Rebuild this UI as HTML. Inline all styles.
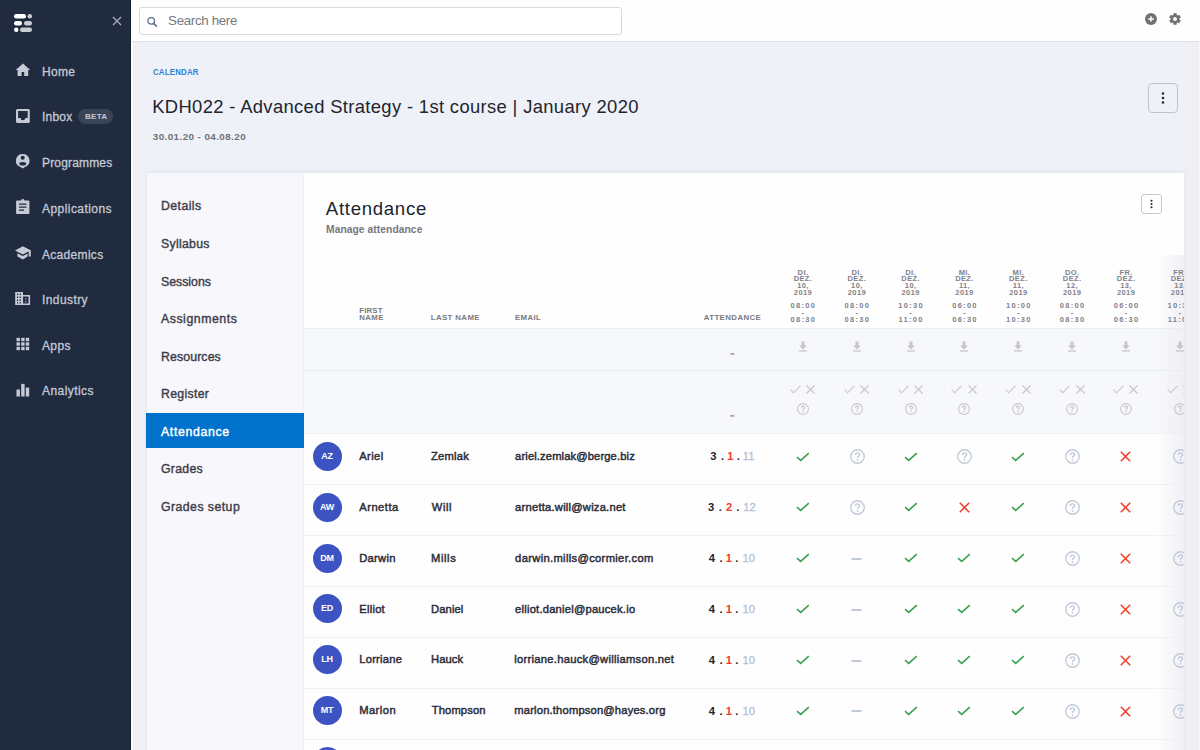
<!DOCTYPE html>
<html><head><meta charset="utf-8">
<style>
*{margin:0;padding:0;box-sizing:border-box}
html,body{width:1200px;height:750px;overflow:hidden}
body{position:relative;background:#eff1f8;font-family:"Liberation Sans",sans-serif;}
.a{position:absolute;white-space:nowrap;line-height:1}
.ic{position:absolute}
</style></head>
<body>

<div class="a" style="left:0;top:0;width:131px;height:750px;background:#202b3f"></div>
<svg class="a" style="left:13px;top:13px" width="21" height="21" viewBox="0 0 21 21">
    <rect x="1" y="1" width="12" height="4.5" rx="2.25" fill="#fff"/>
    <circle cx="16.8" cy="3.25" r="2.25" fill="#c9ccd3"/>
    <rect x="1" y="8" width="8" height="4.5" rx="2.25" fill="#fff"/>
    <rect x="11" y="8" width="8" height="4.5" rx="2.25" fill="#c9ccd3"/>
    <circle cx="3.25" cy="16.8" r="2.25" fill="#fff"/>
    <rect x="7" y="14.5" width="12" height="4.5" rx="2.25" fill="#c9ccd3"/>
  </svg>
  <svg class="a" style="left:112px;top:16px" width="10" height="10" viewBox="0 0 10 10"><path d="M1 1L9 9M9 1L1 9" stroke="#aab0bc" stroke-width="1.2"/></svg>
  <svg class="a" style="left:0;top:0" width="131" height="420" viewBox="0 0 131 420">
  <g fill="#c5cad6">
    <path d="M23 63.6L15.6 69.9H17.6V76H21.6V72.1H24.2V76H28.2V69.9H30.2Z"/>
    <path fill-rule="evenodd" d="M17.5 109H28.3Q29.8 109 29.8 110.5V121.5Q29.8 123 28.3 123H17.5Q16 123 16 121.5V110.5Q16 109 17.5 109ZM18.1 111.1V117.9H20.6A2.3 2.3 0 0 0 25.2 117.9H27.7V111.1Z"/>
    <path fill-rule="evenodd" d="M22.7 153.9A6.8 6.8 0 0 1 25 167.1L22.7 168.6L20.4 167.1A6.8 6.8 0 0 1 22.7 153.9ZM22.7 155.8A2 2 0 1 0 22.7 159.8A2 2 0 1 0 22.7 155.8ZM19.2 163.7A3.5 1.8 0 1 0 26.2 163.7A3.5 1.8 0 1 0 19.2 163.7Z"/>
    <path fill-rule="evenodd" d="M17 200.4H21.1Q21.6 199 22.9 199Q24.2 199 24.6 200.4H28.5Q29.4 200.4 29.4 201.3V213Q29.4 213.9 28.5 213.9H17Q16.1 213.9 16.1 213V201.3Q16.1 200.4 17 200.4ZM19 203.6V204.8H26.5V203.6ZM19 206.6V207.8H26.5V206.6ZM19 209.5V210.7H24V209.5Z"/>
    <path d="M22.8 246.2L30.8 250.3V256.6H28.7V251.5L22.8 254.5L15 250.4Z"/>
    <path d="M17.4 253.3L22.8 256.1L27.6 253.6V256.4L22.8 259.4L17.4 256.4Z"/>
    <path fill-rule="evenodd" d="M15.2 291.9H23V295H30.1V304.9H15.2ZM17 293.5V295H18.2V293.5ZM19.6 293.5V295H20.8V293.5ZM17 296.6V298.1H18.2V296.6ZM19.6 296.6V298.1H20.8V296.6ZM17 299.4V300.9H18.2V299.4ZM19.6 299.4V300.9H20.8V299.4ZM17 302.2V303.6H18.2V302.2ZM19.6 302.2V303.6H20.8V302.2ZM23.1 296.6V303.6H28.5V296.6Z"/>
    <rect x="25.2" y="298.4" width="1.2" height="1.2"/><rect x="25.2" y="301.2" width="1.2" height="1.2"/>
    <rect x="16.5" y="337.8" width="3.4" height="3.4"/><rect x="21.2" y="337.8" width="3.4" height="3.4"/><rect x="25.8" y="337.8" width="3.4" height="3.4"/>
    <rect x="16.5" y="342.3" width="3.4" height="3.4"/><rect x="21.2" y="342.3" width="3.4" height="3.4"/><rect x="25.8" y="342.3" width="3.4" height="3.4"/>
    <rect x="16.5" y="346.8" width="3.4" height="3.4"/><rect x="21.2" y="346.8" width="3.4" height="3.4"/><rect x="25.8" y="346.8" width="3.4" height="3.4"/>
    <rect x="16.5" y="389.5" width="3.4" height="7"/><rect x="21.2" y="383.9" width="3.4" height="12.6"/><rect x="25.8" y="387.6" width="3.4" height="8.9"/>
  </g>
  </svg>

<div class="a" style="left:42.00px;top:66.20px;font-size:12px;font-weight:normal;color:#c3c9d5;letter-spacing:0.300px;-webkit-text-stroke:0.3px #c3c9d5">Home</div>
<div class="a" style="left:42.00px;top:111.48px;font-size:12px;font-weight:normal;color:#c3c9d5;letter-spacing:0.200px;-webkit-text-stroke:0.3px #c3c9d5">Inbox</div>
<div class="a" style="left:42.00px;top:157.40px;font-size:12px;font-weight:normal;color:#c3c9d5;letter-spacing:0.167px;-webkit-text-stroke:0.3px #c3c9d5">Programmes</div>
<div class="a" style="left:42.00px;top:203.00px;font-size:12px;font-weight:normal;color:#c3c9d5;letter-spacing:0.445px;-webkit-text-stroke:0.3px #c3c9d5">Applications</div>
<div class="a" style="left:42.00px;top:248.60px;font-size:12px;font-weight:normal;color:#c3c9d5;letter-spacing:0.310px;-webkit-text-stroke:0.3px #c3c9d5">Academics</div>
<div class="a" style="left:42.00px;top:294.20px;font-size:12px;font-weight:normal;color:#c3c9d5;letter-spacing:0.414px;-webkit-text-stroke:0.3px #c3c9d5">Industry</div>
<div class="a" style="left:42.00px;top:339.80px;font-size:12px;font-weight:normal;color:#c3c9d5;letter-spacing:0.353px;-webkit-text-stroke:0.3px #c3c9d5">Apps</div>
<div class="a" style="left:42.00px;top:385.40px;font-size:12px;font-weight:normal;color:#c3c9d5;letter-spacing:0.440px;-webkit-text-stroke:0.3px #c3c9d5">Analytics</div>
<div class="a" style="left:78.3px;top:109px;width:35.2px;height:14.8px;border-radius:7.4px;background:#3a4457"></div>
<div class="a" style="left:85.00px;top:112.50px;font-size:8px;font-weight:bold;color:#c5cad6;letter-spacing:0.300px;">BETA</div>
<div class="a" style="left:131px;top:0;width:1.5px;height:750px;background:#fafbfd"></div>
<div class="a" style="left:132.5px;top:0;width:15px;height:750px;background:linear-gradient(to right,#f0f0f4,rgba(239,241,248,0))"></div>
<div class="a" style="left:1183px;top:0;width:15.6px;height:750px;background:#efeff4"></div>
<div class="a" style="left:1198.6px;top:0;width:1.4px;height:750px;background:#f9f9fb"></div>
<div class="a" style="left:130px;top:0;width:1px;height:750px;background:#1b2332"></div>
<div class="a" style="left:131px;top:0;width:1069px;height:42px;background:#fefeff;border-bottom:1px solid #e2e3ea"></div>
<div class="a" style="left:139px;top:7px;width:483px;height:28px;border:1.3px solid #d3d8e2;border-radius:3px;background:#fff"></div>
<svg class="a" style="left:146px;top:16px" width="12" height="12" viewBox="0 0 12 12"><circle cx="5.2" cy="4.9" r="3.3" fill="none" stroke="#5d7190" stroke-width="1.3"/><path d="M7.6 7.4L10.9 10.6" stroke="#5d7190" stroke-width="1.5"/></svg>
<div class="a" style="left:168.10px;top:14.04px;font-size:13.3px;font-weight:normal;color:#77777c;letter-spacing:-0.320px;">Search here</div>
<svg class="a" style="left:1145px;top:13px" width="12" height="12" viewBox="0 0 12 12"><circle cx="6" cy="6" r="6" fill="#707075"/><path d="M6 3.2V8.8M3.2 6H8.8" stroke="#fff" stroke-width="1.4"/></svg>
<svg class="a" style="left:1169px;top:13px" width="12" height="12" viewBox="0 0 12 12"><path fill="#707075" fill-rule="evenodd" d="M10.37 6.54 L11.82 7.45 L10.16 10.32 L8.65 9.51 L7.71 10.05 L7.66 11.77 L4.34 11.77 L4.29 10.05 L3.35 9.51 L1.84 10.32 L0.18 7.45 L1.63 6.54 L1.63 5.46 L0.18 4.55 L1.84 1.68 L3.35 2.49 L4.29 1.95 L4.34 0.23 L7.66 0.23 L7.71 1.95 L8.65 2.49 L10.16 1.68 L11.82 4.55 L10.37 5.46Z M8 6A2 2 0 1 0 4 6A2 2 0 1 0 8 6Z"/></svg>
<div class="a" style="left:152.80px;top:68.30px;font-size:9px;font-weight:bold;color:#2f7fd3;letter-spacing:0.250px;transform:scaleX(0.87);transform-origin:0 0">CALENDAR</div>
<div class="a" style="left:152.20px;top:98.12px;font-size:18.4px;font-weight:normal;color:#22242e;letter-spacing:0.347px;">KDH022 - Advanced Strategy - 1st course | January 2020</div>
<div class="a" style="left:152.80px;top:131.50px;font-size:9.9px;font-weight:bold;color:#707078;letter-spacing:0.400px;">30.01.20 - 04.08.20</div>
<div class="a" style="left:1148px;top:83px;width:30px;height:30px;border:1.2px solid #c2c3c9;border-radius:4px"></div>
<svg class="a" style="left:1148px;top:83px" width="30" height="30"><g fill="#2a2b33"><circle cx="15" cy="10.5" r="1.3"/><circle cx="15" cy="15" r="1.3"/><circle cx="15" cy="19.5" r="1.3"/></g></svg>
<div class="a" style="left:146.5px;top:172.7px;width:1037px;height:600px;background:#f8f8fc;box-shadow:0 -1px 4px rgba(40,40,70,0.07)"></div>
<div class="a" style="left:304px;top:172.7px;width:880px;height:578px;background:#fefeff"></div>
<div class="a" style="left:303.3px;top:176px;width:1px;height:578px;background:#eeeef3"></div>
<div class="a" style="left:146px;top:413px;width:158px;height:35px;background:#0072cc"></div>
<div class="a" style="left:161.00px;top:199.90px;font-size:12.3px;font-weight:normal;color:#3d3e49;letter-spacing:0.433px;-webkit-text-stroke:0.4px #3d3e49">Details</div>
<div class="a" style="left:161.00px;top:237.77px;font-size:12.3px;font-weight:normal;color:#3d3e49;letter-spacing:0.289px;-webkit-text-stroke:0.4px #3d3e49">Syllabus</div>
<div class="a" style="left:161.00px;top:275.64px;font-size:12.3px;font-weight:normal;color:#3d3e49;letter-spacing:0.003px;-webkit-text-stroke:0.4px #3d3e49">Sessions</div>
<div class="a" style="left:161.00px;top:312.71px;font-size:12.3px;font-weight:normal;color:#3d3e49;letter-spacing:0.540px;-webkit-text-stroke:0.4px #3d3e49">Assignments</div>
<div class="a" style="left:161.00px;top:350.58px;font-size:12.3px;font-weight:normal;color:#3d3e49;letter-spacing:0.120px;-webkit-text-stroke:0.4px #3d3e49">Resources</div>
<div class="a" style="left:161.00px;top:388.45px;font-size:12.3px;font-weight:normal;color:#3d3e49;letter-spacing:0.300px;-webkit-text-stroke:0.4px #3d3e49">Register</div>
<div class="a" style="left:161.00px;top:425.52px;font-size:12.3px;font-weight:normal;color:#fff;letter-spacing:0.656px;-webkit-text-stroke:0.4px #fff">Attendance</div>
<div class="a" style="left:161.00px;top:463.39px;font-size:12.3px;font-weight:normal;color:#3d3e49;letter-spacing:0.284px;-webkit-text-stroke:0.4px #3d3e49">Grades</div>
<div class="a" style="left:161.00px;top:501.26px;font-size:12.3px;font-weight:normal;color:#3d3e49;letter-spacing:0.445px;-webkit-text-stroke:0.4px #3d3e49">Grades setup</div>
<div class="a" style="left:325.80px;top:199.58px;font-size:18.6px;font-weight:normal;color:#202330;letter-spacing:0.711px;">Attendance</div>
<div class="a" style="left:326.00px;top:225.04px;font-size:10.3px;font-weight:bold;color:#76767e;letter-spacing:0.050px;">Manage attendance</div>
<div class="a" style="left:1141px;top:194px;width:21px;height:20px;border:1.1px solid #c9cacf;border-radius:3px"></div>
<svg class="a" style="left:1141px;top:194px" width="21" height="20"><g fill="#2a2b33"><circle cx="10.5" cy="6.8" r="1.05"/><circle cx="10.5" cy="10" r="1.05"/><circle cx="10.5" cy="13.2" r="1.05"/></g></svg>
<div class="a" style="left:359.20px;top:307.24px;font-size:7.8px;font-weight:bold;color:#7a7a80;letter-spacing:0.200px;">FIRST</div>
<div class="a" style="left:359.20px;top:314.24px;font-size:7.8px;font-weight:bold;color:#7a7a80;letter-spacing:0.453px;">NAME</div>
<div class="a" style="left:430.80px;top:313.94px;font-size:7.8px;font-weight:bold;color:#7a7a80;letter-spacing:0.400px;">LAST NAME</div>
<div class="a" style="left:514.90px;top:313.59px;font-size:7.8px;font-weight:bold;color:#7a7a80;letter-spacing:0.400px;">EMAIL</div>
<div class="a" style="left:703.70px;top:314.24px;font-size:7.8px;font-weight:bold;color:#7a7a80;letter-spacing:0.444px;">ATTENDANCE</div>
<div class="a" style="left:304px;top:172px;width:880px;height:578px;overflow:hidden">
<div class="a" style="left:0;top:156px;width:880px;height:43px;background:#f7f8fc;border-top:1px solid #e9edf4"></div>
<div class="a" style="left:0;top:198px;width:880px;height:63px;background:#f7f8fc;border-top:1px solid #e8ecf3"></div>
<div class="a" style="left:0;top:261.0px;width:880px;height:51px;border-top:1px solid #f0f1f6;background:#fefeff"></div>
<div class="a" style="left:0;top:312.0px;width:880px;height:51px;border-top:1px solid #f0f1f6;background:#fefeff"></div>
<div class="a" style="left:0;top:363.0px;width:880px;height:51px;border-top:1px solid #f0f1f6;background:#fefeff"></div>
<div class="a" style="left:0;top:414.0px;width:880px;height:51px;border-top:1px solid #f0f1f6;background:#fefeff"></div>
<div class="a" style="left:0;top:465.0px;width:880px;height:51px;border-top:1px solid #f0f1f6;background:#fefeff"></div>
<div class="a" style="left:0;top:516.0px;width:880px;height:51px;border-top:1px solid #f0f1f6;background:#fefeff"></div>
<div class="a" style="left:0;top:567.0px;width:880px;height:51px;border-top:1px solid #f0f1f6;background:#fefeff"></div>
<div class="a" style="left:852px;top:83px;width:28px;height:600px;background:linear-gradient(to right,rgba(238,238,244,0),rgba(236,236,242,0.75))"></div>
<div style="position:absolute;width:60px;text-align:center;font-size:7.5px;font-weight:bold;color:#818189;letter-spacing:0.4px;line-height:6.85px;left:469.0px;top:97.6px">DI.<br>DEZ.<br>10,<br>2019</div>
<div style="position:absolute;width:60px;text-align:center;font-size:7.5px;font-weight:bold;color:#818189;letter-spacing:1.3px;line-height:7.05px;left:469.4px;top:129.6px">08:00<br>-<br>08:30</div>
<div style="position:absolute;width:60px;text-align:center;font-size:7.5px;font-weight:bold;color:#818189;letter-spacing:0.4px;line-height:6.85px;left:522.9px;top:97.6px">DI.<br>DEZ.<br>10,<br>2019</div>
<div style="position:absolute;width:60px;text-align:center;font-size:7.5px;font-weight:bold;color:#818189;letter-spacing:1.3px;line-height:7.05px;left:523.3px;top:129.6px">08:00<br>-<br>08:30</div>
<div style="position:absolute;width:60px;text-align:center;font-size:7.5px;font-weight:bold;color:#818189;letter-spacing:0.4px;line-height:6.85px;left:576.7px;top:97.6px">DI.<br>DEZ.<br>10,<br>2019</div>
<div style="position:absolute;width:60px;text-align:center;font-size:7.5px;font-weight:bold;color:#818189;letter-spacing:1.3px;line-height:7.05px;left:577.1px;top:129.6px">10:30<br>-<br>11:00</div>
<div style="position:absolute;width:60px;text-align:center;font-size:7.5px;font-weight:bold;color:#818189;letter-spacing:0.4px;line-height:6.85px;left:630.5px;top:97.6px">MI.<br>DEZ.<br>11,<br>2019</div>
<div style="position:absolute;width:60px;text-align:center;font-size:7.5px;font-weight:bold;color:#818189;letter-spacing:1.3px;line-height:7.05px;left:631.0px;top:129.6px">06:00<br>-<br>06:30</div>
<div style="position:absolute;width:60px;text-align:center;font-size:7.5px;font-weight:bold;color:#818189;letter-spacing:0.4px;line-height:6.85px;left:684.4px;top:97.6px">MI.<br>DEZ.<br>11,<br>2019</div>
<div style="position:absolute;width:60px;text-align:center;font-size:7.5px;font-weight:bold;color:#818189;letter-spacing:1.3px;line-height:7.05px;left:684.8px;top:129.6px">10:00<br>-<br>10:30</div>
<div style="position:absolute;width:60px;text-align:center;font-size:7.5px;font-weight:bold;color:#818189;letter-spacing:0.4px;line-height:6.85px;left:738.2px;top:97.6px">DO.<br>DEZ.<br>12,<br>2019</div>
<div style="position:absolute;width:60px;text-align:center;font-size:7.5px;font-weight:bold;color:#818189;letter-spacing:1.3px;line-height:7.05px;left:738.7px;top:129.6px">08:00<br>-<br>08:30</div>
<div style="position:absolute;width:60px;text-align:center;font-size:7.5px;font-weight:bold;color:#818189;letter-spacing:0.4px;line-height:6.85px;left:792.1px;top:97.6px">FR.<br>DEZ.<br>13,<br>2019</div>
<div style="position:absolute;width:60px;text-align:center;font-size:7.5px;font-weight:bold;color:#818189;letter-spacing:1.3px;line-height:7.05px;left:792.6px;top:129.6px">06:00<br>-<br>06:30</div>
<div style="position:absolute;width:60px;text-align:center;font-size:7.5px;font-weight:bold;color:#818189;letter-spacing:0.4px;line-height:6.85px;left:846.0px;top:97.6px">FR.<br>DEZ.<br>13,<br>2019</div>
<div style="position:absolute;width:60px;text-align:center;font-size:7.5px;font-weight:bold;color:#818189;letter-spacing:1.3px;line-height:7.05px;left:846.4px;top:129.6px">10:30<br>-<br>11:00</div>
<svg class="ic" style="left:426px;top:178px" width="5" height="8"><rect x="0.3" y="3.2" width="4" height="1.4" fill="#8f8f96"/></svg>
<svg class="ic" style="left:426px;top:240.3px" width="5" height="8"><rect x="0.3" y="3.2" width="4" height="1.4" fill="#8f8f96"/></svg>
<svg class="ic" style="left:493.8px;top:169.0px" width="10" height="11" viewBox="0 0 10 11"><path d="M3.5 0.5H6.5V4.5H9L5 8.5L1 4.5H3.5Z" fill="#c5c5ca"/><rect x="1" y="9.3" width="8" height="1.3" fill="#c5c5ca"/></svg>
<svg class="ic" style="left:485.8px;top:212.5px" width="11" height="9" viewBox="0 0 11 9"><path d="M0.6 4.6L3.6 7.8L10.4 0.8" fill="none" stroke="#c6c6cb" stroke-width="1.1"/></svg>
<svg class="ic" style="left:502.3px;top:212.5px" width="9" height="9" viewBox="0 0 9 9"><path d="M0.5 0.5L8.5 8.5M8.5 0.5L0.5 8.5" fill="none" stroke="#c6c6cb" stroke-width="1.1"/></svg>
<svg class="ic" style="left:492.8px;top:231.0px" width="12" height="12" viewBox="0 0 12 12"><circle cx="6" cy="6" r="5.4" fill="none" stroke="#c6c6cb" stroke-width="1.05"/><path d="M4.4 4.7Q4.4 3.1 6 3.1Q7.6 3.1 7.6 4.6Q7.6 5.4 6.8 5.8Q6 6.2 6 7.2" fill="none" stroke="#c6c6cb" stroke-width="1.15"/><circle cx="6" cy="8.8" r="0.75" fill="#c6c6cb"/></svg>
<svg class="ic" style="left:547.6px;top:169.0px" width="10" height="11" viewBox="0 0 10 11"><path d="M3.5 0.5H6.5V4.5H9L5 8.5L1 4.5H3.5Z" fill="#c5c5ca"/><rect x="1" y="9.3" width="8" height="1.3" fill="#c5c5ca"/></svg>
<svg class="ic" style="left:539.6px;top:212.5px" width="11" height="9" viewBox="0 0 11 9"><path d="M0.6 4.6L3.6 7.8L10.4 0.8" fill="none" stroke="#c6c6cb" stroke-width="1.1"/></svg>
<svg class="ic" style="left:556.1px;top:212.5px" width="9" height="9" viewBox="0 0 9 9"><path d="M0.5 0.5L8.5 8.5M8.5 0.5L0.5 8.5" fill="none" stroke="#c6c6cb" stroke-width="1.1"/></svg>
<svg class="ic" style="left:546.6px;top:231.0px" width="12" height="12" viewBox="0 0 12 12"><circle cx="6" cy="6" r="5.4" fill="none" stroke="#c6c6cb" stroke-width="1.05"/><path d="M4.4 4.7Q4.4 3.1 6 3.1Q7.6 3.1 7.6 4.6Q7.6 5.4 6.8 5.8Q6 6.2 6 7.2" fill="none" stroke="#c6c6cb" stroke-width="1.15"/><circle cx="6" cy="8.8" r="0.75" fill="#c6c6cb"/></svg>
<svg class="ic" style="left:601.5px;top:169.0px" width="10" height="11" viewBox="0 0 10 11"><path d="M3.5 0.5H6.5V4.5H9L5 8.5L1 4.5H3.5Z" fill="#c5c5ca"/><rect x="1" y="9.3" width="8" height="1.3" fill="#c5c5ca"/></svg>
<svg class="ic" style="left:593.5px;top:212.5px" width="11" height="9" viewBox="0 0 11 9"><path d="M0.6 4.6L3.6 7.8L10.4 0.8" fill="none" stroke="#c6c6cb" stroke-width="1.1"/></svg>
<svg class="ic" style="left:610.0px;top:212.5px" width="9" height="9" viewBox="0 0 9 9"><path d="M0.5 0.5L8.5 8.5M8.5 0.5L0.5 8.5" fill="none" stroke="#c6c6cb" stroke-width="1.1"/></svg>
<svg class="ic" style="left:600.5px;top:231.0px" width="12" height="12" viewBox="0 0 12 12"><circle cx="6" cy="6" r="5.4" fill="none" stroke="#c6c6cb" stroke-width="1.05"/><path d="M4.4 4.7Q4.4 3.1 6 3.1Q7.6 3.1 7.6 4.6Q7.6 5.4 6.8 5.8Q6 6.2 6 7.2" fill="none" stroke="#c6c6cb" stroke-width="1.15"/><circle cx="6" cy="8.8" r="0.75" fill="#c6c6cb"/></svg>
<svg class="ic" style="left:655.3px;top:169.0px" width="10" height="11" viewBox="0 0 10 11"><path d="M3.5 0.5H6.5V4.5H9L5 8.5L1 4.5H3.5Z" fill="#c5c5ca"/><rect x="1" y="9.3" width="8" height="1.3" fill="#c5c5ca"/></svg>
<svg class="ic" style="left:647.3px;top:212.5px" width="11" height="9" viewBox="0 0 11 9"><path d="M0.6 4.6L3.6 7.8L10.4 0.8" fill="none" stroke="#c6c6cb" stroke-width="1.1"/></svg>
<svg class="ic" style="left:663.8px;top:212.5px" width="9" height="9" viewBox="0 0 9 9"><path d="M0.5 0.5L8.5 8.5M8.5 0.5L0.5 8.5" fill="none" stroke="#c6c6cb" stroke-width="1.1"/></svg>
<svg class="ic" style="left:654.3px;top:231.0px" width="12" height="12" viewBox="0 0 12 12"><circle cx="6" cy="6" r="5.4" fill="none" stroke="#c6c6cb" stroke-width="1.05"/><path d="M4.4 4.7Q4.4 3.1 6 3.1Q7.6 3.1 7.6 4.6Q7.6 5.4 6.8 5.8Q6 6.2 6 7.2" fill="none" stroke="#c6c6cb" stroke-width="1.15"/><circle cx="6" cy="8.8" r="0.75" fill="#c6c6cb"/></svg>
<svg class="ic" style="left:709.2px;top:169.0px" width="10" height="11" viewBox="0 0 10 11"><path d="M3.5 0.5H6.5V4.5H9L5 8.5L1 4.5H3.5Z" fill="#c5c5ca"/><rect x="1" y="9.3" width="8" height="1.3" fill="#c5c5ca"/></svg>
<svg class="ic" style="left:701.2px;top:212.5px" width="11" height="9" viewBox="0 0 11 9"><path d="M0.6 4.6L3.6 7.8L10.4 0.8" fill="none" stroke="#c6c6cb" stroke-width="1.1"/></svg>
<svg class="ic" style="left:717.7px;top:212.5px" width="9" height="9" viewBox="0 0 9 9"><path d="M0.5 0.5L8.5 8.5M8.5 0.5L0.5 8.5" fill="none" stroke="#c6c6cb" stroke-width="1.1"/></svg>
<svg class="ic" style="left:708.2px;top:231.0px" width="12" height="12" viewBox="0 0 12 12"><circle cx="6" cy="6" r="5.4" fill="none" stroke="#c6c6cb" stroke-width="1.05"/><path d="M4.4 4.7Q4.4 3.1 6 3.1Q7.6 3.1 7.6 4.6Q7.6 5.4 6.8 5.8Q6 6.2 6 7.2" fill="none" stroke="#c6c6cb" stroke-width="1.15"/><circle cx="6" cy="8.8" r="0.75" fill="#c6c6cb"/></svg>
<svg class="ic" style="left:763.0px;top:169.0px" width="10" height="11" viewBox="0 0 10 11"><path d="M3.5 0.5H6.5V4.5H9L5 8.5L1 4.5H3.5Z" fill="#c5c5ca"/><rect x="1" y="9.3" width="8" height="1.3" fill="#c5c5ca"/></svg>
<svg class="ic" style="left:755.0px;top:212.5px" width="11" height="9" viewBox="0 0 11 9"><path d="M0.6 4.6L3.6 7.8L10.4 0.8" fill="none" stroke="#c6c6cb" stroke-width="1.1"/></svg>
<svg class="ic" style="left:771.5px;top:212.5px" width="9" height="9" viewBox="0 0 9 9"><path d="M0.5 0.5L8.5 8.5M8.5 0.5L0.5 8.5" fill="none" stroke="#c6c6cb" stroke-width="1.1"/></svg>
<svg class="ic" style="left:762.0px;top:231.0px" width="12" height="12" viewBox="0 0 12 12"><circle cx="6" cy="6" r="5.4" fill="none" stroke="#c6c6cb" stroke-width="1.05"/><path d="M4.4 4.7Q4.4 3.1 6 3.1Q7.6 3.1 7.6 4.6Q7.6 5.4 6.8 5.8Q6 6.2 6 7.2" fill="none" stroke="#c6c6cb" stroke-width="1.15"/><circle cx="6" cy="8.8" r="0.75" fill="#c6c6cb"/></svg>
<svg class="ic" style="left:816.9px;top:169.0px" width="10" height="11" viewBox="0 0 10 11"><path d="M3.5 0.5H6.5V4.5H9L5 8.5L1 4.5H3.5Z" fill="#c5c5ca"/><rect x="1" y="9.3" width="8" height="1.3" fill="#c5c5ca"/></svg>
<svg class="ic" style="left:808.9px;top:212.5px" width="11" height="9" viewBox="0 0 11 9"><path d="M0.6 4.6L3.6 7.8L10.4 0.8" fill="none" stroke="#c6c6cb" stroke-width="1.1"/></svg>
<svg class="ic" style="left:825.4px;top:212.5px" width="9" height="9" viewBox="0 0 9 9"><path d="M0.5 0.5L8.5 8.5M8.5 0.5L0.5 8.5" fill="none" stroke="#c6c6cb" stroke-width="1.1"/></svg>
<svg class="ic" style="left:815.9px;top:231.0px" width="12" height="12" viewBox="0 0 12 12"><circle cx="6" cy="6" r="5.4" fill="none" stroke="#c6c6cb" stroke-width="1.05"/><path d="M4.4 4.7Q4.4 3.1 6 3.1Q7.6 3.1 7.6 4.6Q7.6 5.4 6.8 5.8Q6 6.2 6 7.2" fill="none" stroke="#c6c6cb" stroke-width="1.15"/><circle cx="6" cy="8.8" r="0.75" fill="#c6c6cb"/></svg>
<svg class="ic" style="left:870.8px;top:169.0px" width="10" height="11" viewBox="0 0 10 11"><path d="M3.5 0.5H6.5V4.5H9L5 8.5L1 4.5H3.5Z" fill="#c5c5ca"/><rect x="1" y="9.3" width="8" height="1.3" fill="#c5c5ca"/></svg>
<svg class="ic" style="left:862.8px;top:212.5px" width="11" height="9" viewBox="0 0 11 9"><path d="M0.6 4.6L3.6 7.8L10.4 0.8" fill="none" stroke="#c6c6cb" stroke-width="1.1"/></svg>
<svg class="ic" style="left:879.2px;top:212.5px" width="9" height="9" viewBox="0 0 9 9"><path d="M0.5 0.5L8.5 8.5M8.5 0.5L0.5 8.5" fill="none" stroke="#c6c6cb" stroke-width="1.1"/></svg>
<svg class="ic" style="left:869.8px;top:231.0px" width="12" height="12" viewBox="0 0 12 12"><circle cx="6" cy="6" r="5.4" fill="none" stroke="#c6c6cb" stroke-width="1.05"/><path d="M4.4 4.7Q4.4 3.1 6 3.1Q7.6 3.1 7.6 4.6Q7.6 5.4 6.8 5.8Q6 6.2 6 7.2" fill="none" stroke="#c6c6cb" stroke-width="1.15"/><circle cx="6" cy="8.8" r="0.75" fill="#c6c6cb"/></svg>
<div class="a" style="left:8.5px;top:269.7px;width:29px;height:29px;border-radius:50%;background:#3d53c2;color:#fff;font-size:9px;font-weight:bold;text-align:center;line-height:29px;letter-spacing:-0.2px">AZ</div>
<div class="a" style="left:55.20px;top:278.80px;font-size:11.2px;font-weight:normal;color:#2b2c37;letter-spacing:0.400px;-webkit-text-stroke:0.45px #2b2c37">Ariel</div>
<div class="a" style="left:127.00px;top:278.80px;font-size:11.2px;font-weight:normal;color:#2b2c37;letter-spacing:0.224px;-webkit-text-stroke:0.45px #2b2c37">Zemlak</div>
<div class="a" style="left:211.10px;top:278.80px;font-size:11.2px;font-weight:normal;color:#2b2c37;letter-spacing:0.122px;-webkit-text-stroke:0.45px #2b2c37">ariel.zemlak@berge.biz</div>
<div class="a" style="left:401.20px;top:279.4px;width:16.60px;text-align:center;font-size:11.2px;font-weight:bold;color:#24242c">3</div>
<div class="a" style="left:412.20px;top:279.4px;width:12.80px;text-align:center;font-size:11.2px;font-weight:bold;color:#24242c">.</div>
<div class="a" style="left:419.40px;top:279.4px;width:14.10px;text-align:center;font-size:11.2px;font-weight:bold;color:#f03b2a">1</div>
<div class="a" style="left:427.90px;top:279.4px;width:12.80px;text-align:center;font-size:11.2px;font-weight:bold;color:#24242c">.</div>
<div class="a" style="left:435.10px;top:279.4px;width:19.10px;text-align:center;font-size:11.2px;-webkit-text-stroke:0.3px #b6c1d3;letter-spacing:0.2px;color:#b6c1d3">11</div>
<svg class="ic" style="left:491.8px;top:279.5px" width="14" height="10" viewBox="0 0 14 10"><path d="M1 5.2L4.7 8.4L12.8 1.2" fill="none" stroke="#3ba252" stroke-width="1.6"/></svg>
<svg class="ic" style="left:545.6px;top:277.1px" width="15" height="15" viewBox="0 0 15 15"><circle cx="7.5" cy="7.5" r="6.75" fill="none" stroke="#c0c8d7" stroke-width="1.3"/><path d="M5.5 5.9Q5.5 3.9 7.5 3.9Q9.5 3.9 9.5 5.7Q9.5 6.7 8.5 7.2Q7.5 7.7 7.5 8.9" fill="none" stroke="#c0c8d7" stroke-width="1.35"/><circle cx="7.5" cy="10.9" r="0.9" fill="#c0c8d7"/></svg>
<svg class="ic" style="left:599.5px;top:279.5px" width="14" height="10" viewBox="0 0 14 10"><path d="M1 5.2L4.7 8.4L12.8 1.2" fill="none" stroke="#3ba252" stroke-width="1.6"/></svg>
<svg class="ic" style="left:653.3px;top:277.1px" width="15" height="15" viewBox="0 0 15 15"><circle cx="7.5" cy="7.5" r="6.75" fill="none" stroke="#c0c8d7" stroke-width="1.3"/><path d="M5.5 5.9Q5.5 3.9 7.5 3.9Q9.5 3.9 9.5 5.7Q9.5 6.7 8.5 7.2Q7.5 7.7 7.5 8.9" fill="none" stroke="#c0c8d7" stroke-width="1.35"/><circle cx="7.5" cy="10.9" r="0.9" fill="#c0c8d7"/></svg>
<svg class="ic" style="left:707.2px;top:279.5px" width="14" height="10" viewBox="0 0 14 10"><path d="M1 5.2L4.7 8.4L12.8 1.2" fill="none" stroke="#3ba252" stroke-width="1.6"/></svg>
<svg class="ic" style="left:761.0px;top:277.1px" width="15" height="15" viewBox="0 0 15 15"><circle cx="7.5" cy="7.5" r="6.75" fill="none" stroke="#c0c8d7" stroke-width="1.3"/><path d="M5.5 5.9Q5.5 3.9 7.5 3.9Q9.5 3.9 9.5 5.7Q9.5 6.7 8.5 7.2Q7.5 7.7 7.5 8.9" fill="none" stroke="#c0c8d7" stroke-width="1.35"/><circle cx="7.5" cy="10.9" r="0.9" fill="#c0c8d7"/></svg>
<svg class="ic" style="left:816.4px;top:279.0px" width="11" height="11" viewBox="0 0 11 11"><path d="M0.8 0.8L10.2 10.2M10.2 0.8L0.8 10.2" fill="none" stroke="#f0412b" stroke-width="1.6"/></svg>
<svg class="ic" style="left:868.8px;top:277.1px" width="15" height="15" viewBox="0 0 15 15"><circle cx="7.5" cy="7.5" r="6.75" fill="none" stroke="#c0c8d7" stroke-width="1.3"/><path d="M5.5 5.9Q5.5 3.9 7.5 3.9Q9.5 3.9 9.5 5.7Q9.5 6.7 8.5 7.2Q7.5 7.7 7.5 8.9" fill="none" stroke="#c0c8d7" stroke-width="1.35"/><circle cx="7.5" cy="10.9" r="0.9" fill="#c0c8d7"/></svg>
<div class="a" style="left:8.5px;top:320.6px;width:29px;height:29px;border-radius:50%;background:#3d53c2;color:#fff;font-size:9px;font-weight:bold;text-align:center;line-height:29px;letter-spacing:-0.2px">AW</div>
<div class="a" style="left:55.20px;top:329.70px;font-size:11.2px;font-weight:normal;color:#2b2c37;letter-spacing:0.507px;-webkit-text-stroke:0.45px #2b2c37">Arnetta</div>
<div class="a" style="left:127.80px;top:329.70px;font-size:11.2px;font-weight:normal;color:#2b2c37;letter-spacing:0.533px;-webkit-text-stroke:0.45px #2b2c37">Will</div>
<div class="a" style="left:211.10px;top:329.70px;font-size:11.2px;font-weight:normal;color:#2b2c37;letter-spacing:0.224px;-webkit-text-stroke:0.45px #2b2c37">arnetta.will@wiza.net</div>
<div class="a" style="left:398.80px;top:330.3px;width:16.60px;text-align:center;font-size:11.2px;font-weight:bold;color:#24242c">3</div>
<div class="a" style="left:409.80px;top:330.3px;width:12.80px;text-align:center;font-size:11.2px;font-weight:bold;color:#24242c">.</div>
<div class="a" style="left:417.00px;top:330.3px;width:16.00px;text-align:center;font-size:11.2px;font-weight:bold;color:#f03b2a">2</div>
<div class="a" style="left:427.40px;top:330.3px;width:12.80px;text-align:center;font-size:11.2px;font-weight:bold;color:#24242c">.</div>
<div class="a" style="left:434.60px;top:330.3px;width:22.00px;text-align:center;font-size:11.2px;-webkit-text-stroke:0.3px #b6c1d3;letter-spacing:0.2px;color:#b6c1d3">12</div>
<svg class="ic" style="left:491.8px;top:330.4px" width="14" height="10" viewBox="0 0 14 10"><path d="M1 5.2L4.7 8.4L12.8 1.2" fill="none" stroke="#3ba252" stroke-width="1.6"/></svg>
<svg class="ic" style="left:545.6px;top:328.0px" width="15" height="15" viewBox="0 0 15 15"><circle cx="7.5" cy="7.5" r="6.75" fill="none" stroke="#c0c8d7" stroke-width="1.3"/><path d="M5.5 5.9Q5.5 3.9 7.5 3.9Q9.5 3.9 9.5 5.7Q9.5 6.7 8.5 7.2Q7.5 7.7 7.5 8.9" fill="none" stroke="#c0c8d7" stroke-width="1.35"/><circle cx="7.5" cy="10.9" r="0.9" fill="#c0c8d7"/></svg>
<svg class="ic" style="left:599.5px;top:330.4px" width="14" height="10" viewBox="0 0 14 10"><path d="M1 5.2L4.7 8.4L12.8 1.2" fill="none" stroke="#3ba252" stroke-width="1.6"/></svg>
<svg class="ic" style="left:654.8px;top:329.9px" width="11" height="11" viewBox="0 0 11 11"><path d="M0.8 0.8L10.2 10.2M10.2 0.8L0.8 10.2" fill="none" stroke="#f0412b" stroke-width="1.6"/></svg>
<svg class="ic" style="left:707.2px;top:330.4px" width="14" height="10" viewBox="0 0 14 10"><path d="M1 5.2L4.7 8.4L12.8 1.2" fill="none" stroke="#3ba252" stroke-width="1.6"/></svg>
<svg class="ic" style="left:761.0px;top:328.0px" width="15" height="15" viewBox="0 0 15 15"><circle cx="7.5" cy="7.5" r="6.75" fill="none" stroke="#c0c8d7" stroke-width="1.3"/><path d="M5.5 5.9Q5.5 3.9 7.5 3.9Q9.5 3.9 9.5 5.7Q9.5 6.7 8.5 7.2Q7.5 7.7 7.5 8.9" fill="none" stroke="#c0c8d7" stroke-width="1.35"/><circle cx="7.5" cy="10.9" r="0.9" fill="#c0c8d7"/></svg>
<svg class="ic" style="left:816.4px;top:329.9px" width="11" height="11" viewBox="0 0 11 11"><path d="M0.8 0.8L10.2 10.2M10.2 0.8L0.8 10.2" fill="none" stroke="#f0412b" stroke-width="1.6"/></svg>
<svg class="ic" style="left:868.8px;top:328.0px" width="15" height="15" viewBox="0 0 15 15"><circle cx="7.5" cy="7.5" r="6.75" fill="none" stroke="#c0c8d7" stroke-width="1.3"/><path d="M5.5 5.9Q5.5 3.9 7.5 3.9Q9.5 3.9 9.5 5.7Q9.5 6.7 8.5 7.2Q7.5 7.7 7.5 8.9" fill="none" stroke="#c0c8d7" stroke-width="1.35"/><circle cx="7.5" cy="10.9" r="0.9" fill="#c0c8d7"/></svg>
<div class="a" style="left:8.5px;top:371.5px;width:29px;height:29px;border-radius:50%;background:#3d53c2;color:#fff;font-size:9px;font-weight:bold;text-align:center;line-height:29px;letter-spacing:-0.2px">DM</div>
<div class="a" style="left:55.20px;top:380.60px;font-size:11.2px;font-weight:normal;color:#2b2c37;letter-spacing:0.288px;-webkit-text-stroke:0.45px #2b2c37">Darwin</div>
<div class="a" style="left:127.00px;top:380.60px;font-size:11.2px;font-weight:normal;color:#2b2c37;letter-spacing:0.600px;-webkit-text-stroke:0.45px #2b2c37">Mills</div>
<div class="a" style="left:211.10px;top:380.60px;font-size:11.2px;font-weight:normal;color:#2b2c37;letter-spacing:0.327px;-webkit-text-stroke:0.45px #2b2c37">darwin.mills@cormier.com</div>
<div class="a" style="left:399.30px;top:381.2px;width:17.00px;text-align:center;font-size:11.2px;font-weight:bold;color:#24242c">4</div>
<div class="a" style="left:410.70px;top:381.2px;width:12.80px;text-align:center;font-size:11.2px;font-weight:bold;color:#24242c">.</div>
<div class="a" style="left:417.90px;top:381.2px;width:14.10px;text-align:center;font-size:11.2px;font-weight:bold;color:#f03b2a">1</div>
<div class="a" style="left:426.40px;top:381.2px;width:12.80px;text-align:center;font-size:11.2px;font-weight:bold;color:#24242c">.</div>
<div class="a" style="left:433.60px;top:381.2px;width:22.50px;text-align:center;font-size:11.2px;-webkit-text-stroke:0.3px #b6c1d3;letter-spacing:0.2px;color:#b6c1d3">10</div>
<svg class="ic" style="left:491.8px;top:381.3px" width="14" height="10" viewBox="0 0 14 10"><path d="M1 5.2L4.7 8.4L12.8 1.2" fill="none" stroke="#3ba252" stroke-width="1.6"/></svg>
<svg class="ic" style="left:547.4px;top:384.7px" width="11" height="4" viewBox="0 0 11 4"><path d="M0.5 2H10.6" stroke="#abb7cb" stroke-width="1.5"/></svg>
<svg class="ic" style="left:599.5px;top:381.3px" width="14" height="10" viewBox="0 0 14 10"><path d="M1 5.2L4.7 8.4L12.8 1.2" fill="none" stroke="#3ba252" stroke-width="1.6"/></svg>
<svg class="ic" style="left:653.3px;top:381.3px" width="14" height="10" viewBox="0 0 14 10"><path d="M1 5.2L4.7 8.4L12.8 1.2" fill="none" stroke="#3ba252" stroke-width="1.6"/></svg>
<svg class="ic" style="left:707.2px;top:381.3px" width="14" height="10" viewBox="0 0 14 10"><path d="M1 5.2L4.7 8.4L12.8 1.2" fill="none" stroke="#3ba252" stroke-width="1.6"/></svg>
<svg class="ic" style="left:761.0px;top:378.9px" width="15" height="15" viewBox="0 0 15 15"><circle cx="7.5" cy="7.5" r="6.75" fill="none" stroke="#c0c8d7" stroke-width="1.3"/><path d="M5.5 5.9Q5.5 3.9 7.5 3.9Q9.5 3.9 9.5 5.7Q9.5 6.7 8.5 7.2Q7.5 7.7 7.5 8.9" fill="none" stroke="#c0c8d7" stroke-width="1.35"/><circle cx="7.5" cy="10.9" r="0.9" fill="#c0c8d7"/></svg>
<svg class="ic" style="left:816.4px;top:380.8px" width="11" height="11" viewBox="0 0 11 11"><path d="M0.8 0.8L10.2 10.2M10.2 0.8L0.8 10.2" fill="none" stroke="#f0412b" stroke-width="1.6"/></svg>
<svg class="ic" style="left:868.8px;top:378.9px" width="15" height="15" viewBox="0 0 15 15"><circle cx="7.5" cy="7.5" r="6.75" fill="none" stroke="#c0c8d7" stroke-width="1.3"/><path d="M5.5 5.9Q5.5 3.9 7.5 3.9Q9.5 3.9 9.5 5.7Q9.5 6.7 8.5 7.2Q7.5 7.7 7.5 8.9" fill="none" stroke="#c0c8d7" stroke-width="1.35"/><circle cx="7.5" cy="10.9" r="0.9" fill="#c0c8d7"/></svg>
<div class="a" style="left:8.5px;top:422.4px;width:29px;height:29px;border-radius:50%;background:#3d53c2;color:#fff;font-size:9px;font-weight:bold;text-align:center;line-height:29px;letter-spacing:-0.2px">ED</div>
<div class="a" style="left:55.20px;top:431.50px;font-size:11.2px;font-weight:normal;color:#2b2c37;letter-spacing:0.256px;-webkit-text-stroke:0.45px #2b2c37">Elliot</div>
<div class="a" style="left:127.00px;top:431.50px;font-size:11.2px;font-weight:normal;color:#2b2c37;letter-spacing:0.128px;-webkit-text-stroke:0.45px #2b2c37">Daniel</div>
<div class="a" style="left:211.10px;top:431.50px;font-size:11.2px;font-weight:normal;color:#2b2c37;letter-spacing:0.218px;-webkit-text-stroke:0.45px #2b2c37">elliot.daniel@paucek.io</div>
<div class="a" style="left:399.30px;top:432.2px;width:17.00px;text-align:center;font-size:11.2px;font-weight:bold;color:#24242c">4</div>
<div class="a" style="left:410.70px;top:432.2px;width:12.80px;text-align:center;font-size:11.2px;font-weight:bold;color:#24242c">.</div>
<div class="a" style="left:417.90px;top:432.2px;width:14.10px;text-align:center;font-size:11.2px;font-weight:bold;color:#f03b2a">1</div>
<div class="a" style="left:426.40px;top:432.2px;width:12.80px;text-align:center;font-size:11.2px;font-weight:bold;color:#24242c">.</div>
<div class="a" style="left:433.60px;top:432.2px;width:22.50px;text-align:center;font-size:11.2px;-webkit-text-stroke:0.3px #b6c1d3;letter-spacing:0.2px;color:#b6c1d3">10</div>
<svg class="ic" style="left:491.8px;top:432.2px" width="14" height="10" viewBox="0 0 14 10"><path d="M1 5.2L4.7 8.4L12.8 1.2" fill="none" stroke="#3ba252" stroke-width="1.6"/></svg>
<svg class="ic" style="left:547.4px;top:435.6px" width="11" height="4" viewBox="0 0 11 4"><path d="M0.5 2H10.6" stroke="#abb7cb" stroke-width="1.5"/></svg>
<svg class="ic" style="left:599.5px;top:432.2px" width="14" height="10" viewBox="0 0 14 10"><path d="M1 5.2L4.7 8.4L12.8 1.2" fill="none" stroke="#3ba252" stroke-width="1.6"/></svg>
<svg class="ic" style="left:653.3px;top:432.2px" width="14" height="10" viewBox="0 0 14 10"><path d="M1 5.2L4.7 8.4L12.8 1.2" fill="none" stroke="#3ba252" stroke-width="1.6"/></svg>
<svg class="ic" style="left:707.2px;top:432.2px" width="14" height="10" viewBox="0 0 14 10"><path d="M1 5.2L4.7 8.4L12.8 1.2" fill="none" stroke="#3ba252" stroke-width="1.6"/></svg>
<svg class="ic" style="left:761.0px;top:429.8px" width="15" height="15" viewBox="0 0 15 15"><circle cx="7.5" cy="7.5" r="6.75" fill="none" stroke="#c0c8d7" stroke-width="1.3"/><path d="M5.5 5.9Q5.5 3.9 7.5 3.9Q9.5 3.9 9.5 5.7Q9.5 6.7 8.5 7.2Q7.5 7.7 7.5 8.9" fill="none" stroke="#c0c8d7" stroke-width="1.35"/><circle cx="7.5" cy="10.9" r="0.9" fill="#c0c8d7"/></svg>
<svg class="ic" style="left:816.4px;top:431.7px" width="11" height="11" viewBox="0 0 11 11"><path d="M0.8 0.8L10.2 10.2M10.2 0.8L0.8 10.2" fill="none" stroke="#f0412b" stroke-width="1.6"/></svg>
<svg class="ic" style="left:868.8px;top:429.8px" width="15" height="15" viewBox="0 0 15 15"><circle cx="7.5" cy="7.5" r="6.75" fill="none" stroke="#c0c8d7" stroke-width="1.3"/><path d="M5.5 5.9Q5.5 3.9 7.5 3.9Q9.5 3.9 9.5 5.7Q9.5 6.7 8.5 7.2Q7.5 7.7 7.5 8.9" fill="none" stroke="#c0c8d7" stroke-width="1.35"/><circle cx="7.5" cy="10.9" r="0.9" fill="#c0c8d7"/></svg>
<div class="a" style="left:8.5px;top:473.3px;width:29px;height:29px;border-radius:50%;background:#3d53c2;color:#fff;font-size:9px;font-weight:bold;text-align:center;line-height:29px;letter-spacing:-0.2px">LH</div>
<div class="a" style="left:55.20px;top:482.40px;font-size:11.2px;font-weight:normal;color:#2b2c37;letter-spacing:0.251px;-webkit-text-stroke:0.45px #2b2c37">Lorriane</div>
<div class="a" style="left:127.00px;top:482.40px;font-size:11.2px;font-weight:normal;color:#2b2c37;letter-spacing:0.080px;-webkit-text-stroke:0.45px #2b2c37">Hauck</div>
<div class="a" style="left:210.30px;top:482.40px;font-size:11.2px;font-weight:normal;color:#2b2c37;letter-spacing:0.274px;-webkit-text-stroke:0.45px #2b2c37">lorriane.hauck@williamson.net</div>
<div class="a" style="left:399.30px;top:483.1px;width:17.00px;text-align:center;font-size:11.2px;font-weight:bold;color:#24242c">4</div>
<div class="a" style="left:410.70px;top:483.1px;width:12.80px;text-align:center;font-size:11.2px;font-weight:bold;color:#24242c">.</div>
<div class="a" style="left:417.90px;top:483.1px;width:14.10px;text-align:center;font-size:11.2px;font-weight:bold;color:#f03b2a">1</div>
<div class="a" style="left:426.40px;top:483.1px;width:12.80px;text-align:center;font-size:11.2px;font-weight:bold;color:#24242c">.</div>
<div class="a" style="left:433.60px;top:483.1px;width:22.50px;text-align:center;font-size:11.2px;-webkit-text-stroke:0.3px #b6c1d3;letter-spacing:0.2px;color:#b6c1d3">10</div>
<svg class="ic" style="left:491.8px;top:483.1px" width="14" height="10" viewBox="0 0 14 10"><path d="M1 5.2L4.7 8.4L12.8 1.2" fill="none" stroke="#3ba252" stroke-width="1.6"/></svg>
<svg class="ic" style="left:547.4px;top:486.5px" width="11" height="4" viewBox="0 0 11 4"><path d="M0.5 2H10.6" stroke="#abb7cb" stroke-width="1.5"/></svg>
<svg class="ic" style="left:599.5px;top:483.1px" width="14" height="10" viewBox="0 0 14 10"><path d="M1 5.2L4.7 8.4L12.8 1.2" fill="none" stroke="#3ba252" stroke-width="1.6"/></svg>
<svg class="ic" style="left:653.3px;top:483.1px" width="14" height="10" viewBox="0 0 14 10"><path d="M1 5.2L4.7 8.4L12.8 1.2" fill="none" stroke="#3ba252" stroke-width="1.6"/></svg>
<svg class="ic" style="left:707.2px;top:483.1px" width="14" height="10" viewBox="0 0 14 10"><path d="M1 5.2L4.7 8.4L12.8 1.2" fill="none" stroke="#3ba252" stroke-width="1.6"/></svg>
<svg class="ic" style="left:761.0px;top:480.7px" width="15" height="15" viewBox="0 0 15 15"><circle cx="7.5" cy="7.5" r="6.75" fill="none" stroke="#c0c8d7" stroke-width="1.3"/><path d="M5.5 5.9Q5.5 3.9 7.5 3.9Q9.5 3.9 9.5 5.7Q9.5 6.7 8.5 7.2Q7.5 7.7 7.5 8.9" fill="none" stroke="#c0c8d7" stroke-width="1.35"/><circle cx="7.5" cy="10.9" r="0.9" fill="#c0c8d7"/></svg>
<svg class="ic" style="left:816.4px;top:482.6px" width="11" height="11" viewBox="0 0 11 11"><path d="M0.8 0.8L10.2 10.2M10.2 0.8L0.8 10.2" fill="none" stroke="#f0412b" stroke-width="1.6"/></svg>
<svg class="ic" style="left:868.8px;top:480.7px" width="15" height="15" viewBox="0 0 15 15"><circle cx="7.5" cy="7.5" r="6.75" fill="none" stroke="#c0c8d7" stroke-width="1.3"/><path d="M5.5 5.9Q5.5 3.9 7.5 3.9Q9.5 3.9 9.5 5.7Q9.5 6.7 8.5 7.2Q7.5 7.7 7.5 8.9" fill="none" stroke="#c0c8d7" stroke-width="1.35"/><circle cx="7.5" cy="10.9" r="0.9" fill="#c0c8d7"/></svg>
<div class="a" style="left:8.5px;top:524.2px;width:29px;height:29px;border-radius:50%;background:#3d53c2;color:#fff;font-size:9px;font-weight:bold;text-align:center;line-height:29px;letter-spacing:-0.2px">MT</div>
<div class="a" style="left:55.20px;top:533.30px;font-size:11.2px;font-weight:normal;color:#2b2c37;letter-spacing:0.448px;-webkit-text-stroke:0.45px #2b2c37">Marlon</div>
<div class="a" style="left:127.80px;top:533.30px;font-size:11.2px;font-weight:normal;color:#2b2c37;letter-spacing:0.114px;-webkit-text-stroke:0.45px #2b2c37">Thompson</div>
<div class="a" style="left:210.30px;top:533.30px;font-size:11.2px;font-weight:normal;color:#2b2c37;letter-spacing:0.173px;-webkit-text-stroke:0.45px #2b2c37">marlon.thompson@hayes.org</div>
<div class="a" style="left:399.30px;top:533.9px;width:17.00px;text-align:center;font-size:11.2px;font-weight:bold;color:#24242c">4</div>
<div class="a" style="left:410.70px;top:533.9px;width:12.80px;text-align:center;font-size:11.2px;font-weight:bold;color:#24242c">.</div>
<div class="a" style="left:417.90px;top:533.9px;width:14.10px;text-align:center;font-size:11.2px;font-weight:bold;color:#f03b2a">1</div>
<div class="a" style="left:426.40px;top:533.9px;width:12.80px;text-align:center;font-size:11.2px;font-weight:bold;color:#24242c">.</div>
<div class="a" style="left:433.60px;top:533.9px;width:22.50px;text-align:center;font-size:11.2px;-webkit-text-stroke:0.3px #b6c1d3;letter-spacing:0.2px;color:#b6c1d3">10</div>
<svg class="ic" style="left:491.8px;top:534.0px" width="14" height="10" viewBox="0 0 14 10"><path d="M1 5.2L4.7 8.4L12.8 1.2" fill="none" stroke="#3ba252" stroke-width="1.6"/></svg>
<svg class="ic" style="left:547.4px;top:537.4px" width="11" height="4" viewBox="0 0 11 4"><path d="M0.5 2H10.6" stroke="#abb7cb" stroke-width="1.5"/></svg>
<svg class="ic" style="left:599.5px;top:534.0px" width="14" height="10" viewBox="0 0 14 10"><path d="M1 5.2L4.7 8.4L12.8 1.2" fill="none" stroke="#3ba252" stroke-width="1.6"/></svg>
<svg class="ic" style="left:653.3px;top:534.0px" width="14" height="10" viewBox="0 0 14 10"><path d="M1 5.2L4.7 8.4L12.8 1.2" fill="none" stroke="#3ba252" stroke-width="1.6"/></svg>
<svg class="ic" style="left:707.2px;top:534.0px" width="14" height="10" viewBox="0 0 14 10"><path d="M1 5.2L4.7 8.4L12.8 1.2" fill="none" stroke="#3ba252" stroke-width="1.6"/></svg>
<svg class="ic" style="left:761.0px;top:531.6px" width="15" height="15" viewBox="0 0 15 15"><circle cx="7.5" cy="7.5" r="6.75" fill="none" stroke="#c0c8d7" stroke-width="1.3"/><path d="M5.5 5.9Q5.5 3.9 7.5 3.9Q9.5 3.9 9.5 5.7Q9.5 6.7 8.5 7.2Q7.5 7.7 7.5 8.9" fill="none" stroke="#c0c8d7" stroke-width="1.35"/><circle cx="7.5" cy="10.9" r="0.9" fill="#c0c8d7"/></svg>
<svg class="ic" style="left:816.4px;top:533.5px" width="11" height="11" viewBox="0 0 11 11"><path d="M0.8 0.8L10.2 10.2M10.2 0.8L0.8 10.2" fill="none" stroke="#f0412b" stroke-width="1.6"/></svg>
<svg class="ic" style="left:868.8px;top:531.6px" width="15" height="15" viewBox="0 0 15 15"><circle cx="7.5" cy="7.5" r="6.75" fill="none" stroke="#c0c8d7" stroke-width="1.3"/><path d="M5.5 5.9Q5.5 3.9 7.5 3.9Q9.5 3.9 9.5 5.7Q9.5 6.7 8.5 7.2Q7.5 7.7 7.5 8.9" fill="none" stroke="#c0c8d7" stroke-width="1.35"/><circle cx="7.5" cy="10.9" r="0.9" fill="#c0c8d7"/></svg>
<div class="a" style="left:8.5px;top:575.1px;width:29px;height:29px;border-radius:50%;background:#3d53c2;color:#fff;font-size:9px;font-weight:bold;text-align:center;line-height:29px;letter-spacing:-0.2px"></div>
</div>
</body></html>
